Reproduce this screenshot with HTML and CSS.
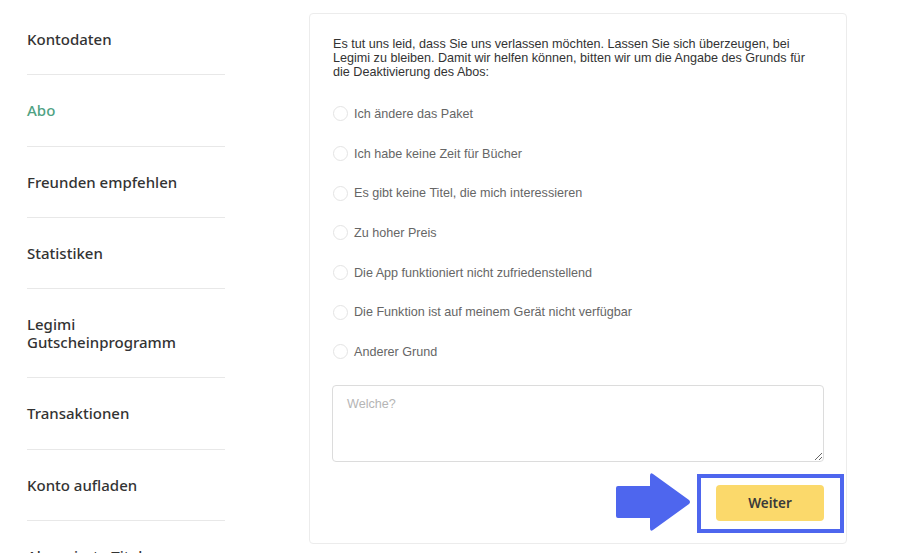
FILE: index.html
```html
<!DOCTYPE html>
<html lang="de">

<head>
    <meta charset="UTF-8">
    <meta name="viewport" content="width=device-width, initial-scale=1.0">
    <title>Abo kündigen</title>
    <link rel="stylesheet" href="styles.css">
</head>

<body>
    <div class="page">
        <ul class="menu">
            <li>Kontodaten</li>
            <li class="active">Abo</li>
            <li>Freunden empfehlen</li>
            <li>Statistiken</li>
            <li>Legimi Gutscheinprogramm</li>
            <li>Transaktionen</li>
            <li>Konto aufladen</li>
            <li>Abonnierte Titel</li>
        </ul>

        <div class="card">
            <p class="intro">Es tut uns leid, dass Sie uns verlassen möchten. Lassen Sie sich überzeugen, bei Legimi zu bleiben. Damit wir helfen können, bitten wir um die Angabe des Grunds für die Deaktivierung des Abos:</p>

            <div class="reasons">
                <label class="reason"><span class="dot"></span>Ich ändere das Paket</label>
                <label class="reason"><span class="dot"></span>Ich habe keine Zeit für Bücher</label>
                <label class="reason"><span class="dot"></span>Es gibt keine Titel, die mich interessieren</label>
                <label class="reason"><span class="dot"></span>Zu hoher Preis</label>
                <label class="reason"><span class="dot"></span>Die App funktioniert nicht zufriedenstellend</label>
                <label class="reason"><span class="dot"></span>Die Funktion ist auf meinem Gerät nicht verfügbar</label>
                <label class="reason"><span class="dot"></span>Anderer Grund</label>
            </div>

            <textarea class="other" placeholder="Welche?"></textarea>

            <div class="actions">
                <svg class="arrow" width="76" height="60" viewBox="0 0 76 60">
                    <path d="M3 14 H35 V4 Q35 0 38 2 L74 28 Q76 30 74 32 L38 58 Q35 60 35 56 V46 H3 Q1 46 1 44 V16 Q1 14 3 14 Z" fill="#4e66ee" />
                </svg>
                <div class="mark"></div>
                <button class="next">Weiter</button>
            </div>
        </div>
    </div>
</body>

</html>
```

FILE: styles.css
```css
* {
    margin: 0;
    padding: 0;
    list-style: none;
    box-sizing: border-box;
}

html,
body {
    height: 100%;
    overflow: hidden;
    background: #fff;
}

.page {
    display: flex;
    align-items: flex-start;
}

.menu {
    width: 225px;
    padding: 4px 0 0 27px;
    font-family: "Noto Sans", sans-serif;
    font-size: 15px;
    font-weight: 500;
    color: #333;
}

.menu li {
    padding: 26px 0 26.3px;
    line-height: 18px;
    border-bottom: 1px solid #e8e8e8;
}

.menu .active {
    color: #4fa283;
}

.card {
    width: 538px;
    margin: 13px 0 0 84px;
    padding: 23px 22px 22px;
    border: 1px solid #ececec;
    border-radius: 4px;
    font-family: "Liberation Sans", Arial, sans-serif;
    font-size: 12.6px;
}

.intro {
    line-height: 14px;
    color: #333;
    padding-left: 1px;
}

.reasons {
    margin-top: 15px;
}

.reason {
    display: flex;
    align-items: center;
    height: 39.7px;
    color: #666;
}

.dot {
    width: 15px;
    height: 15px;
    margin: 0 6px 0 1px;
    border: 1px solid #e4e4e4;
    border-radius: 50%;
}

.other {
    display: block;
    width: 100%;
    height: 77px;
    margin-top: 13px;
    padding: 11px 14px;
    border: 1px solid #dcdcdc;
    border-radius: 4px;
    font-family: "Liberation Sans", Arial, sans-serif;
    font-size: 12.6px;
    color: #333;
    resize: vertical;
}

.other::placeholder {
    color: #b5b5b5;
}

.actions {
    position: relative;
    display: flex;
    justify-content: flex-end;
    margin-top: 23px;
}

.next {
    width: 108px;
    height: 36px;
    border: none;
    border-radius: 4px;
    background: #fbd96b;
    font-family: "Noto Sans", sans-serif;
    font-size: 13.5px;
    font-weight: 600;
    color: #3a3a3a;
}

.mark {
    position: absolute;
    right: -20px;
    top: -11px;
    width: 147px;
    height: 59px;
    border: 4px solid #4e66ee;
}

.arrow {
    position: absolute;
    right: 133px;
    top: -13px;
}
```
